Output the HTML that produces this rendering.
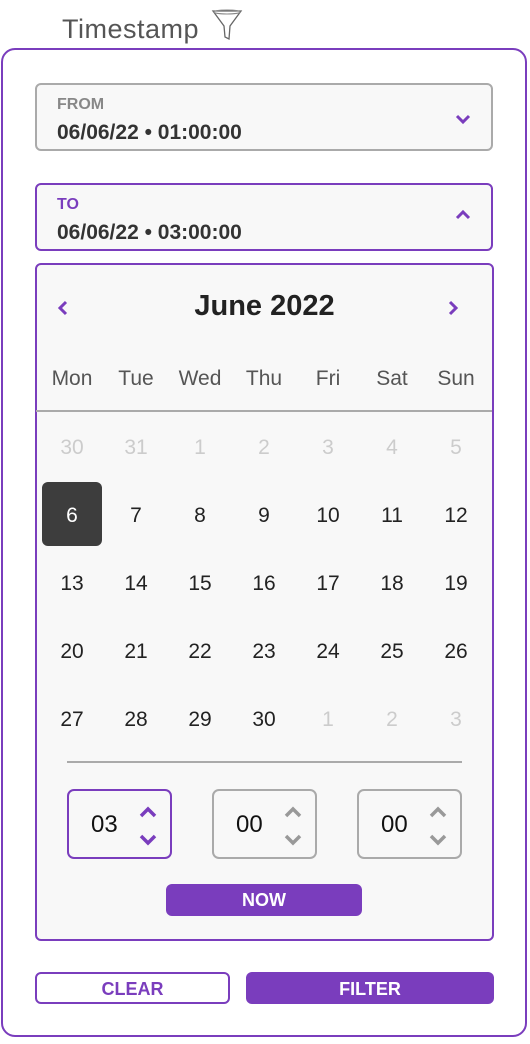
<!DOCTYPE html>
<html><head><style>
*{box-sizing:border-box;margin:0;padding:0}
body{width:530px;height:1044px;background:#fff;font-family:"Liberation Sans",sans-serif;position:relative;overflow:hidden}
.a{position:absolute}
.title{left:62px;top:14px;font-size:27px;color:#555;letter-spacing:0.5px}
.panel{left:1px;top:48px;width:526px;height:989px;border:2px solid #7a3dbd;border-radius:14px;background:#fff}
.fld{left:35px;width:458px;border:2px solid #aaa;border-radius:6px;background:#f8f8f8}
.lbl{position:absolute;left:20px;font-size:16px;font-weight:bold;color:#888}
.val{position:absolute;left:20px;font-size:21px;font-weight:bold;color:#333}
.cal{left:35px;top:263px;width:459px;height:678px;border:2px solid #7a3dbd;border-radius:6px;background:#f8f8f8}
.c{position:absolute;width:64px;text-align:center;font-size:21px;color:#222}
.g{color:#ccc}
.tb{top:789px;width:105px;height:70px;border:2px solid #aaa;border-radius:7px;background:#f8f8f8}
.tb span{position:absolute;left:22px;top:20px;font-size:24px;color:#111}
.tb svg{position:absolute;left:68px;top:13px}
.btn{color:#fff;background:#7a3dbd;border-radius:6px;font-weight:bold;font-size:18px;text-align:center}
</style></head><body>
<div class="a title">Timestamp</div>
<svg class="a" style="left:211px;top:7px" width="32" height="34" viewBox="0 0 32 34"><path d="M2 4 L30 4 L19 19 L18 32 L14 30 L13 19 Z" fill="none" stroke="#666" stroke-width="1.3"/><ellipse cx="16" cy="5" rx="13" ry="2" fill="none" stroke="#888"/></svg>
<div class="a panel"></div>
<div class="a fld" style="top:83px;height:68px"><div class="lbl" style="top:11px">FROM</div><div class="val" style="top:36px">06/06/22 • 01:00:00</div>
<svg style="position:absolute;left:418px;top:28px" width="16" height="12"><path d="M2 3 L8 9 L14 3" fill="none" stroke="#7a3dbd" stroke-width="3"/></svg></div>
<div class="a fld" style="top:183px;height:68px;border-color:#7a3dbd"><div class="lbl" style="top:11px;color:#7a3dbd">TO</div><div class="val" style="top:36px">06/06/22 • 03:00:00</div>
<svg style="position:absolute;left:418px;top:24px" width="16" height="12"><path d="M2 9 L8 3 L14 9" fill="none" stroke="#7a3dbd" stroke-width="3"/></svg></div>
<div class="a cal"></div>
<svg class="a" style="left:56px;top:299px" width="14" height="18"><path d="M10 3 L4 9 L10 15" fill="none" stroke="#7a3dbd" stroke-width="3"/></svg>
<svg class="a" style="left:446px;top:299px" width="14" height="18"><path d="M4 3 L10 9 L4 15" fill="none" stroke="#7a3dbd" stroke-width="3"/></svg>
<div class="a" style="left:35px;width:459px;top:290px;text-align:center;font-size:29px;font-weight:bold;color:#222">June 2022</div>
<div class="a" style="left:36px;top:410px;width:456px;height:2px;background:#aaa"></div>
<div class="a" style="left:67px;top:761px;width:395px;height:2px;background:#aaa"></div>
<div class="a" style="left:42px;top:482px;width:60px;height:64px;border-radius:6px;background:#3d3d3d"></div>
<div id="grid"></div>
<div class="a tb" style="left:67px;border-color:#7a3dbd"><span>03</span><svg width="22" height="44"><path d="M4 12 L11 5 L18 12 M4 32 L11 39 L18 32" fill="none" stroke="#7a3dbd" stroke-width="3.5"/></svg></div>
<div class="a tb" style="left:212px"><span>00</span><svg width="22" height="44"><path d="M4 12 L11 5 L18 12 M4 32 L11 39 L18 32" fill="none" stroke="#999" stroke-width="3.5"/></svg></div>
<div class="a tb" style="left:357px"><span>00</span><svg width="22" height="44"><path d="M4 12 L11 5 L18 12 M4 32 L11 39 L18 32" fill="none" stroke="#999" stroke-width="3.5"/></svg></div>
<div class="a btn" style="left:166px;top:884px;width:196px;height:32px;line-height:33px">NOW</div>
<div class="a" style="left:35px;top:972px;width:195px;height:32px;border:2px solid #7a3dbd;border-radius:6px;color:#7a3dbd;font-weight:bold;font-size:18px;text-align:center;line-height:30px">CLEAR</div>
<div class="a btn" style="left:246px;top:972px;width:248px;height:32px;line-height:34px">FILTER</div>
<script>
var g=document.getElementById('grid'),h='';
var cx=[72,136,200,264,328,392,456];
var d=['Mon','Tue','Wed','Thu','Fri','Sat','Sun'];
d.forEach(function(t,i){h+='<div class="c" style="left:'+(cx[i]-32)+'px;top:367px;color:#555">'+t+'</div>';});
var rows=[[30,31,1,2,3,4,5],[6,7,8,9,10,11,12],[13,14,15,16,17,18,19],[20,21,22,23,24,25,26],[27,28,29,30,1,2,3]];
rows.forEach(function(r,ri){r.forEach(function(n,i){var gr=(ri==0)||(ri==4&&i>3);var st=(ri==1&&i==0)?'color:#fff;':'';h+='<div class="c'+(gr?' g':'')+'" style="'+st+'left:'+(cx[i]-32)+'px;top:'+(436+ri*68)+'px">'+n+'</div>';});});
g.innerHTML=h;
</script>
</body></html>
